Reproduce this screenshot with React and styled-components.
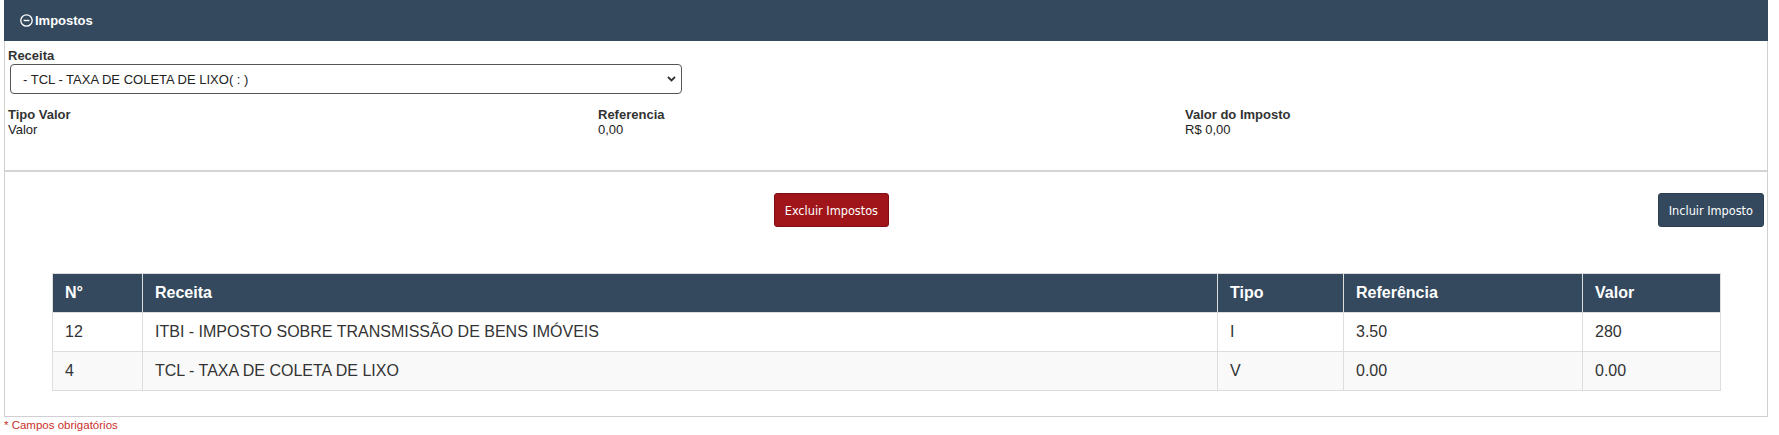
import React from 'react';
import styled, { createGlobalStyle } from 'styled-components';

const GlobalStyle = createGlobalStyle`
	body {
		margin: 0;
		background: #fff;
		font-family: 'Liberation Sans', Arial, sans-serif;
		color: #333;
	}
`;

const rows = [
	{ id: 12, receita: 'ITBI - IMPOSTO SOBRE TRANSMISSÃO DE BENS IMÓVEIS', tipo: 'I', referencia: '3.50', valor: '280' },
	{ id: 4, receita: 'TCL - TAXA DE COLETA DE LIXO', tipo: 'V', referencia: '0.00', valor: '0.00' },
];

const MinusCircle = () => (
	<svg width='13' height='13' viewBox='0 0 13 13' fill='none'>
		<circle cx='6.5' cy='6.5' r='5.7' stroke='#fff' strokeWidth='1.3' />
		<line x1='3.6' y1='6.5' x2='9.4' y2='6.5' stroke='#fff' strokeWidth='1.4' />
	</svg>
);

const Chevron = () => (
	<svg width='9' height='6' viewBox='0 0 9 6' fill='none'>
		<path d='M1 1 L4.5 4.5 L8 1' stroke='#333' strokeWidth='1.8' />
	</svg>
);

export default function App() {
	return (
		<Page>
			<GlobalStyle />
			<Panel>
				<PanelHeader>
					<MinusCircle />
					Impostos
				</PanelHeader>
				<FormSection>
					<Label>Receita</Label>
					<SelectWrap>
						<Select defaultValue='4'>
							<option value='4'>- TCL - TAXA DE COLETA DE LIXO( : )</option>
						</Select>
						<SelectArrow>
							<Chevron />
						</SelectArrow>
					</SelectWrap>
					<InfoGrid>
						<div>
							<Label>Tipo Valor</Label>
							<Value>Valor</Value>
						</div>
						<div>
							<Label>Referencia</Label>
							<Value>0,00</Value>
						</div>
						<div>
							<Label>Valor do Imposto</Label>
							<Value>R$ 0,00</Value>
						</div>
					</InfoGrid>
				</FormSection>
				<Actions>
					<CenterSlot>
						<Button $danger>Excluir Impostos</Button>
					</CenterSlot>
					<Button>Incluir Imposto</Button>
				</Actions>
				<TableWrap>
					<Table>
						<colgroup>
							<col style={{ width: 90 }} />
							<col style={{ width: 1075 }} />
							<col style={{ width: 126 }} />
							<col style={{ width: 239 }} />
							<col style={{ width: 138 }} />
						</colgroup>
						<thead>
							<tr>
								<Th>N°</Th>
								<Th>Receita</Th>
								<Th>Tipo</Th>
								<Th>Referência</Th>
								<Th>Valor</Th>
							</tr>
						</thead>
						<tbody>
							{rows.map((r) => (
								<Tr key={r.id}>
									<Td>{r.id}</Td>
									<Td>{r.receita}</Td>
									<Td>{r.tipo}</Td>
									<Td>{r.referencia}</Td>
									<Td>{r.valor}</Td>
								</Tr>
							))}
						</tbody>
					</Table>
				</TableWrap>
			</Panel>
			<Required>* Campos obrigatórios</Required>
		</Page>
	);
}

const Page = styled.div`
	padding: 0 11px 0 4px;
`;

const Panel = styled.section`
	border: 1px solid #d0d0d0;
	border-top: none;
	background: #fff;
`;

const PanelHeader = styled.header`
	height: 41px;
	margin: 0 -1px;
	background: #34495e;
	color: #fff;
	display: flex;
	align-items: center;
	gap: 2px;
	padding-left: 16px;
	font-size: 13px;
	font-weight: bold;
`;

const FormSection = styled.div`
	padding: 7px 0 33px 3px;
	border-bottom: 2px solid #d4d4d4;
`;

const Label = styled.div`
	font-size: 13px;
	line-height: 15px;
	font-weight: bold;
	color: #333;
`;

const Value = styled.div`
	font-size: 13px;
	line-height: 15px;
	color: #222;
`;

const SelectWrap = styled.div`
	position: relative;
	width: 672px;
	margin: 1px 0 0 2px;
`;

const Select = styled.select`
	appearance: none;
	width: 100%;
	height: 30px;
	padding: 0 12px;
	border: 1px solid #555;
	border-radius: 4px;
	background: #fff;
	font-family: 'Liberation Sans', Arial, sans-serif;
	font-size: 13px;
	color: #222;
`;

const SelectArrow = styled.span`
	position: absolute;
	right: 6px;
	top: 12px;
	display: flex;
	pointer-events: none;
`;

const InfoGrid = styled.div`
	margin-top: 13px;
	display: grid;
	grid-template-columns: 590px 587px 1fr;
`;

const Actions = styled.div`
	display: flex;
	align-items: flex-start;
	padding: 21px 3px 0 0;
`;

const CenterSlot = styled.div`
	flex: 1;
	display: flex;
	justify-content: center;
`;

const Button = styled.button`
	height: 34px;
	padding: 0 10px;
	border-radius: 3px;
	border: 1px solid ${(p) => (p.$danger ? '#7e0e12' : '#2c3e50')};
	background: ${(p) => (p.$danger ? '#a01519' : '#34495e')};
	color: #fff;
	font-family: 'DejaVu Sans Condensed', 'DejaVu Sans', sans-serif;
	font-size: 12.6px;
	cursor: pointer;
`;

const TableWrap = styled.div`
	padding: 46px 47px 25px;
`;

const Table = styled.table`
	width: 100%;
	table-layout: fixed;
	border-collapse: collapse;
	border: 1px solid #ddd;
	font-size: 16px;
`;

const Th = styled.th`
	height: 38px;
	padding: 0 12px;
	background: #34495e;
	color: #fff;
	text-align: left;
	font-weight: bold;
	border-left: 1px solid #ddd;
	&:first-child {
		border-left: none;
	}
`;

const Tr = styled.tr`
	background: #fff;
	&:nth-child(even) {
		background: #f9f9f9;
	}
`;

const Td = styled.td`
	height: 38px;
	padding: 0 12px;
	border: 1px solid #ddd;
	color: #333;
	white-space: nowrap;
`;

const Required = styled.div`
	margin-top: 1px;
	font-size: 11.5px;
	line-height: 14px;
	color: #c9302c;
`;
